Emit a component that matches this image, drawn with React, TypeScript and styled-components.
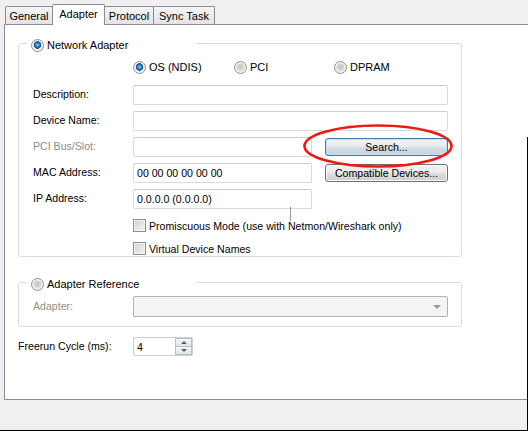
import React from 'react'
import styled, { createGlobalStyle } from 'styled-components'

const GlobalStyle = createGlobalStyle`
  html, body { margin: 0; padding: 0; background: #f0f0f0; }
  body {
    font-family: "Liberation Sans", Arial, sans-serif;
    font-size: 10.6px;
    color: #000;
  }
`

const Window = styled.div`
  position: relative;
  width: 528px;
  height: 431px;
  box-sizing: border-box;
  background: #f0f0f0;
  border-bottom: 1px solid #000;
  overflow: hidden;
`

const TabBar = styled.div`
  display: flex;
  align-items: flex-end;
  height: 24px;
  padding-left: 6px;
`

const Tab = styled.div<{ $active?: boolean; $w: number }>`
  position: relative;
  z-index: ${p => (p.$active ? 2 : 1)};
  box-sizing: border-box;
  width: ${p => p.$w}px;
  height: ${p => (p.$active ? 21 : 18)}px;
  margin-left: -1px;
  margin-bottom: ${p => (p.$active ? -1 : 0)}px;
  padding-bottom: ${p => (p.$active ? 3 : 0)}px;
  display: flex;
  align-items: center;
  justify-content: center;
  border: 1px solid #898c95;
  border-bottom: none;
  border-radius: 2px 2px 0 0;
  background: ${p => (p.$active ? '#fff' : 'linear-gradient(#f5f5f5, #e3e3e3)')};
  font-size: 11px;
  white-space: nowrap;
`

const Panel = styled.div`
  box-sizing: border-box;
  margin-left: 4px;
  height: 376px;
  background: #fff;
  border: 1px solid #898c95;
  border-right: none;
  padding: 18px 0 0 13px;
`

const GroupBox = styled.div<{ $top?: number; $bottom?: number }>`
  box-sizing: border-box;
  width: 444px;
  margin-top: ${p => p.$top ?? 0}px;
  border: 1px solid #d5dfe5;
  border-radius: 3px;
  padding: 0 13px ${p => p.$bottom ?? 0}px 14px;
`

const Legend = styled.div`
  display: flex;
  align-items: center;
  gap: 3px;
  box-sizing: border-box;
  width: 169px;
  height: 14px;
  margin: -6px 0 0 -6px;
  padding-left: 4px;
  background: #fff;
  font-size: 11px;
`

const Radio = styled.span<{ $checked?: boolean }>`
  display: inline-block;
  flex: none;
  box-sizing: border-box;
  width: 13px;
  height: 13px;
  border-radius: 50%;
  border: 1px solid #8e8f8f;
  background: ${p =>
    p.$checked
      ? 'radial-gradient(circle at 50% 45%, #a9dcff 0, #3f8fd6 1.5px, #1f5d9c 3px, #2a4f74 3.6px, #e6e6e6 4px, #f7f7f7 6px)'
      : 'radial-gradient(circle at 50% 45%, #c2c2c2 0, #d6d6d6 3px, #ebebeb 5px, #f6f6f6 6px)'};
  box-shadow: inset 0 0 0 1px #f4f4f4;
`

const Check = styled.span`
  display: inline-block;
  flex: none;
  box-sizing: border-box;
  width: 13px;
  height: 13px;
  border: 1px solid #8e8f8f;
  background: linear-gradient(135deg, #cbcfd5, #f6f6f6);
  box-shadow: inset 0 0 0 1px #f4f4f4;
`

const Option = styled.label`
  display: flex;
  align-items: center;
  gap: 3px;
  font-size: 11px;
`

const OptionRow = styled.div`
  display: grid;
  grid-template-columns: 101px 100px auto;
  height: 14px;
  margin-top: 8px;
  padding-left: 100px;
  align-items: center;
`

const Rows = styled.div<{ $top: number }>`
  display: flex;
  flex-direction: column;
  gap: 6px;
  margin-top: ${p => p.$top}px;
`

const Row = styled.div<{ $h?: number }>`
  display: flex;
  align-items: center;
  height: ${p => p.$h ?? 20}px;
`

const Label = styled.span<{ $disabled?: boolean; $w?: number }>`
  flex: none;
  width: ${p => p.$w ?? 100}px;
  margin-top: -2px;
  color: ${p => (p.$disabled ? '#8d8d8d' : '#000')};
`

const TextBox = styled.div<{ $w?: number }>`
  box-sizing: border-box;
  width: ${p => (p.$w ? `${p.$w}px` : '100%')};
  height: 20px;
  display: flex;
  align-items: center;
  padding-left: 3px;
  border: 1px solid #d6dbe0;
  border-top-color: #c8cdd3;
  border-radius: 2px;
  background: #fff;
`

const Button = styled.div<{ $hot?: boolean }>`
  box-sizing: border-box;
  width: 123px;
  height: 18px;
  margin-left: 13px;
  display: flex;
  align-items: center;
  justify-content: center;
  border: 1px solid ${p => (p.$hot ? '#3c7fb1' : '#707070')};
  border-radius: 3px;
  background: ${p =>
    p.$hot
      ? 'linear-gradient(#f1f5f8, #e6ecf0 45%, #d4dce2 55%, #c9d3da)'
      : 'linear-gradient(#f2f2f2, #ebebeb 45%, #dddddd 55%, #cfcfcf)'};
  box-shadow: inset 0 0 0 1px ${p => (p.$hot ? '#bfe3f8' : '#fbfbfb')};
  white-space: nowrap;
`

const Checks = styled.div`
  display: flex;
  flex-direction: column;
  gap: 10px;
  margin-top: 10px;
  padding-left: 100px;
`

const CheckRow = styled.label`
  display: flex;
  align-items: center;
  gap: 3px;
  height: 13px;
  white-space: nowrap;
`

const Combo = styled.div`
  box-sizing: border-box;
  width: 315px;
  height: 21px;
  display: flex;
  align-items: center;
  justify-content: flex-end;
  padding-right: 6px;
  border: 1px solid #adb2b5;
  border-radius: 2px;
  background: #f4f4f4;
`

const ComboArrow = styled.span`
  width: 0;
  height: 0;
  border-left: 4px solid transparent;
  border-right: 4px solid transparent;
  border-top: 4px solid #9a9a9a;
`

const FreerunRow = styled.div`
  display: flex;
  align-items: center;
  height: 19px;
  margin-top: 10px;
`

const Spin = styled.div`
  box-sizing: border-box;
  width: 60px;
  height: 19px;
  display: flex;
  border: 1px solid #c9ced4;
  border-radius: 2px;
  background: #fff;
`

const SpinValue = styled.div`
  flex: 1;
  display: flex;
  align-items: center;
  padding-left: 3px;
`

const SpinButtons = styled.div`
  width: 17px;
  display: flex;
  flex-direction: column;
`

const SpinButton = styled.div<{ $up?: boolean }>`
  flex: 1;
  display: flex;
  align-items: center;
  justify-content: center;
  border: 1px solid #b9c1c9;
  ${p => (p.$up ? '' : 'border-top: none;')}
  background: linear-gradient(#f6f8fa, #dfe5ea);
  &::after {
    content: '';
    width: 0;
    height: 0;
    border-left: 3px solid transparent;
    border-right: 3px solid transparent;
    ${p => (p.$up ? 'border-bottom' : 'border-top')}: 3px solid #4c607e;
  }
`

const Highlight = styled.svg`
  position: absolute;
  left: 302px;
  top: 123px;
  pointer-events: none;
`

const EdgeLine = styled.div`
  position: absolute;
  right: 0;
  top: 137px;
  bottom: 0;
  width: 1px;
  background: #000;
`

const Cursor = styled.svg`
  position: absolute;
  left: 287px;
  top: 206px;
  pointer-events: none;
`

export default function App() {
  return (
    <Window>
      <GlobalStyle />
      <TabBar>
        <Tab $w={48}>General</Tab>
        <Tab $w={53} $active>Adapter</Tab>
        <Tab $w={50}>Protocol</Tab>
        <Tab $w={62}>Sync Task</Tab>
      </TabBar>
      <Panel>
        <GroupBox $bottom={1}>
          <Legend>
            <Radio $checked />
            <span>Network Adapter</span>
          </Legend>
          <OptionRow>
            <Option><Radio $checked />OS (NDIS)</Option>
            <Option><Radio />PCI</Option>
            <Option><Radio />DPRAM</Option>
          </OptionRow>
          <Rows $top={11}>
            <Row>
              <Label>Description:</Label>
              <TextBox />
            </Row>
            <Row>
              <Label>Device Name:</Label>
              <TextBox />
            </Row>
            <Row>
              <Label $disabled>PCI Bus/Slot:</Label>
              <TextBox $w={179} />
              <Button $hot>Search...</Button>
            </Row>
            <Row>
              <Label>MAC Address:</Label>
              <TextBox $w={179}>00 00 00 00 00 00</TextBox>
              <Button>Compatible Devices...</Button>
            </Row>
            <Row>
              <Label>IP Address:</Label>
              <TextBox $w={179}>0.0.0.0 (0.0.0.0)</TextBox>
            </Row>
          </Rows>
          <Checks>
            <CheckRow><Check />Promiscuous Mode (use with Netmon/Wireshark only)</CheckRow>
            <CheckRow><Check />Virtual Device Names</CheckRow>
          </Checks>
        </GroupBox>

        <GroupBox $top={25} $bottom={9}>
          <Legend>
            <Radio />
            <span>Adapter Reference</span>
          </Legend>
          <Rows $top={5}>
            <Row $h={21}>
              <Label $disabled>Adapter:</Label>
              <Combo><ComboArrow /></Combo>
            </Row>
          </Rows>
        </GroupBox>

        <FreerunRow>
          <Label $w={115}>Freerun Cycle (ms):</Label>
          <Spin>
            <SpinValue>4</SpinValue>
            <SpinButtons>
              <SpinButton $up />
              <SpinButton />
            </SpinButtons>
          </Spin>
        </FreerunRow>
      </Panel>

      <Highlight width="152" height="46" viewBox="0 0 152 46">
        <ellipse cx="76" cy="23" rx="73.5" ry="20.5" fill="none" stroke="#ec1a10" strokeWidth="2.6" />
      </Highlight>
      <Cursor width="7" height="16" viewBox="0 0 7 16">
        <rect x="3" y="1" width="1" height="14" fill="#9a9a9a" />
        <rect x="4" y="9" width="2" height="4" fill="#fff" />
      </Cursor>
      <EdgeLine />
    </Window>
  )
}
